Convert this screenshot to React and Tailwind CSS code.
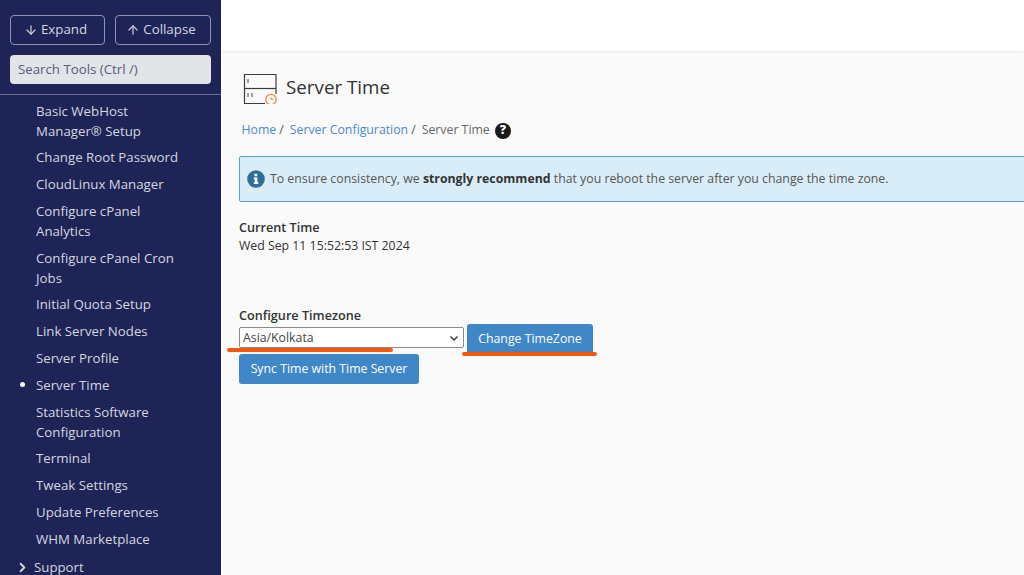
import React from "react";
import { ArrowDown, ArrowUp, ChevronRight } from "lucide-react";

const navItems = [
  "Basic WebHost Manager® Setup",
  "Change Root Password",
  "CloudLinux Manager",
  "Configure cPanel Analytics",
  "Configure cPanel Cron Jobs",
  "Initial Quota Setup",
  "Link Server Nodes",
  "Server Profile",
  "Server Time",
  "Statistics Software Configuration",
  "Terminal",
  "Tweak Settings",
  "Update Preferences",
  "WHM Marketplace",
];

const ServerTimeIcon = () => (
  <svg width="36" height="34" viewBox="0 0 36 34" fill="none" className="shrink-0">
    <path d="M23 33.500H2.500V4.500H34V24" stroke="#3c3c3c" strokeWidth="1.200" />
    <path d="M2.500 18.500H34" stroke="#3c3c3c" strokeWidth="1.200" />
    <path d="M6 9V13M6 23V27M10 23V27" stroke="#666" strokeWidth="1.200" />
    <circle cx="29" cy="29.500" r="5.200" fill="#fafafa" stroke="#f58a4b" strokeWidth="1.300" />
    <path d="M29 27V29.500H31.500" stroke="#f58a4b" strokeWidth="1" />
  </svg>
);

const App = () => {
  return (
    <div className="relative flex h-screen overflow-hidden bg-[#fafafa] font-['Open_Sans',sans-serif] text-[12.3px] text-[#333]">
      {/* Sidebar */}
      <div className="w-[221px] shrink-0 bg-[#1e2455] overflow-hidden">
        <div className="flex gap-[10px] px-[10px] pt-[15px]">
          <button className="flex h-[30px] w-[95px] items-center justify-center gap-[3px] rounded border border-[#8f93ad] pr-[4px] text-[13.3px] text-[#d5d6e0]">
            <ArrowDown size={14} />
            Expand
          </button>
          <button className="flex h-[30px] w-[96px] items-center justify-center gap-[3px] rounded border border-[#8f93ad] pr-[4px] text-[13.3px] text-[#d5d6e0]">
            <ArrowUp size={14} />
            Collapse
          </button>
        </div>
        <div className="mx-[10px] mt-[10px] flex h-[29px] items-center rounded bg-[#e3e4e8] px-2 text-[13.25px] text-[#565a7a]">
          Search Tools (Ctrl /)
        </div>
        <div className="mt-[10px] h-px bg-[#6a6e90]" />
        <ul className="mt-[2.200px]">
          {navItems.map((item) => (
            <li
              key={item}
              className="relative py-[3.4px] pl-[36px] pr-[30px] text-[13.25px] leading-[20px] text-[#d5d6e0]"
            >
              {item === "Server Time" && (
                <span className="absolute left-[20px] top-[11px] h-[5px] w-[5px] rounded-full bg-white" />
              )}
              {item}
            </li>
          ))}
          <li className="flex items-center gap-[4px] pl-[15px] pt-[5px] text-[13.25px] leading-[20px] text-[#d5d6e0]">
            <ChevronRight size={15} strokeWidth={3} />
            Support
          </li>
        </ul>
      </div>

      {/* Main */}
      <div className="min-w-0 flex-1">
        <div className="h-[51px] bg-white shadow-[0_1px_2px_rgba(0,0,0,0.08)]" />
        <div className="pl-[18px]">
          <div className="mt-[19px] flex items-center gap-[8px] pl-[3px]">
            <ServerTimeIcon />
            <h1 className="text-[18.8px] leading-[30px] text-[#333]">Server Time</h1>
          </div>
          <div className="mt-[16px] flex items-center pl-[2.500px] leading-[20px]">
            <span className="text-[#4a8bc9]">Home</span>
            <span className="ml-[3px] mr-[6px] text-[#555]">/</span>
            <span className="text-[#4a8bc9]">Server Configuration</span>
            <span className="ml-[3px] mr-[6px] text-[#555]">/</span>
            <span className="text-[#666]">Server Time</span>
            <span className="ml-[5px] mt-[1px] flex h-[16px] w-[16px] items-center justify-center rounded-full bg-[#1a1a1a] text-[12.500px] font-extrabold leading-none text-white">
              ?
            </span>
          </div>
          <div className="mt-[16px] -mr-4 flex h-[46px] items-center gap-[5px] rounded-[2px] border border-[#5b9fd0] bg-[#d9edf8] pl-[7px] text-[#555]">
            <svg width="18" height="18" viewBox="0 0 18 18" className="shrink-0">
              <circle cx="9" cy="9" r="8.800" fill="#2f6f95" />
              <path d="M7.400 3.800H10.200V6.200H7.400ZM6.800 7.600H10.400V12.300H11.300V14H6.800V12.300H7.700V9.300H6.800Z" fill="#fff" />
            </svg>
            <span>
              To ensure consistency, we <strong className="font-bold text-[#333]">strongly recommend</strong> that you
              reboot the server after you change the time zone.
            </span>
          </div>
          <div className="mt-[16px] text-[12.65px] font-semibold leading-[18px]">Current Time</div>
          <div className="mt-[1px] leading-[18px]">Wed Sep 11 15:52:53 IST 2024</div>
          <div className="mt-[51px] text-[12.65px] font-semibold leading-[18px]">Configure Timezone</div>
          <div className="mt-[1px] flex items-start gap-[3px]">
            <div className="mt-[2px] flex h-[21px] w-[225px] items-center justify-between rounded-[2px] border border-[#8a8a8a] bg-white pl-[3px] pr-[5px] pt-[1px] leading-none text-[#444]">
              Asia/Kolkata
              <svg width="8" height="5" viewBox="0 0 8 5" fill="none">
                <path d="M0.500 0.500L4 4L7.500 0.500" stroke="#333" strokeWidth="1.400" />
              </svg>
            </div>
            <button className="-mt-[1px] h-[30px] w-[126px] rounded-[3px] bg-[#3f87c7] text-[12.3px] text-white">
              Change TimeZone
            </button>
          </div>
          <button className="block h-[30px] w-[180px] rounded-[3px] bg-[#3f87c7] text-[12.3px] text-white">
            Sync Time with Time Server
          </button>
        </div>
      </div>

      {/* Orange annotations drawn over the screenshot */}
      <div className="absolute left-[227px] top-[348px] h-[4px] w-[166px] rounded-full bg-[#f4580f]" />
      <div className="absolute left-[462px] top-[352px] h-[4px] w-[135px] rounded-full bg-[#f4580f]" />
    </div>
  );
};

export default App;
